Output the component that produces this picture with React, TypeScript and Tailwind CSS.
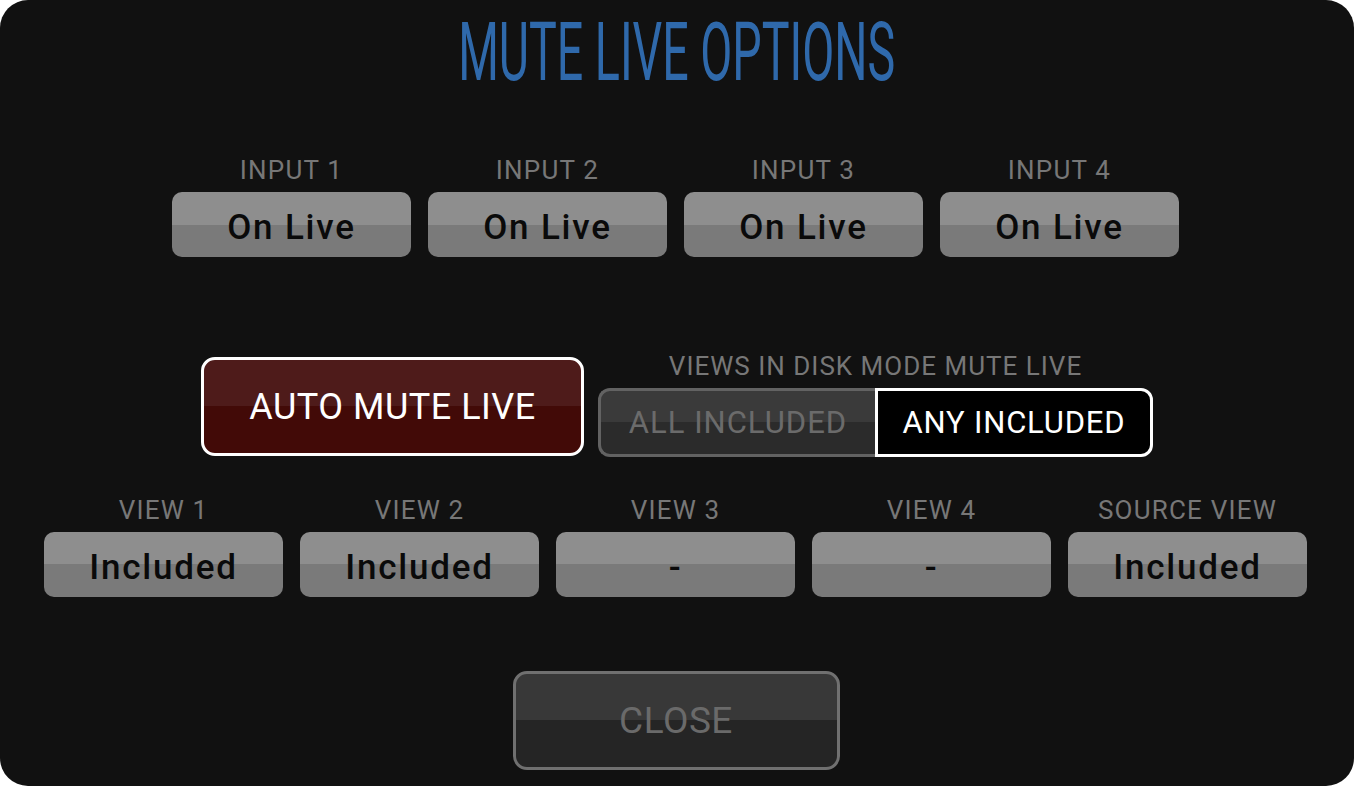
import React from "react";

const font = { fontFamily: "Roboto, 'Liberation Sans', sans-serif" };

function GrayButton({ label, value }: { label: string; value: string }) {
  return (
    <div className="flex flex-col items-center w-[239px]">
      <div className="h-[26px] text-[26px] leading-[26px] text-[#777777] tracking-[1.2px] whitespace-nowrap">
        {label}
      </div>
      <div className="mt-[9px] w-[239px] h-[65px] rounded-[10px] bg-[linear-gradient(to_bottom,#8e8e8e_0%,#8e8e8e_50%,#7a7a7a_50%,#7a7a7a_100%)] flex items-center justify-center pt-[5px]">
        <span className="text-[35px] leading-[35px] font-medium text-[#0a0a0a] tracking-[1.8px]">{value}</span>
      </div>
    </div>
  );
}

export default function App() {
  const inputs = ["INPUT 1", "INPUT 2", "INPUT 3", "INPUT 4"];
  const views: [string, string][] = [
    ["VIEW 1", "Included"],
    ["VIEW 2", "Included"],
    ["VIEW 3", "-"],
    ["VIEW 4", "-"],
    ["SOURCE VIEW", "Included"],
  ];
  return (
    <div className="w-[1354px] h-[786px] bg-white" style={font}>
      <div className="w-full h-full bg-[#111111] rounded-[28px] flex flex-col items-center overflow-hidden">
        <div className="pt-[11px] h-[93px] flex justify-center">
          <h1 className="inline-block text-[82px] leading-[82px] font-normal text-[#2f69ab] scale-x-[0.568] whitespace-nowrap">
            MUTE LIVE OPTIONS
          </h1>
        </div>

        <div className="mt-[64px] mr-[3px] flex gap-[17px]">
          {inputs.map((l) => (
            <GrayButton key={l} label={l} value="On Live" />
          ))}
        </div>

        <div className="mt-[96px] flex items-start gap-[14px]">
          <div className="mt-[4px] w-[383px] h-[99px] rounded-[14px] border-[3px] border-white bg-[linear-gradient(to_bottom,#4e1b1a_0%,#4e1b1a_50%,#420a07_50%,#420a07_100%)] flex items-center justify-center">
            <span className="text-[36px] leading-[36px] text-white tracking-[0.5px]">AUTO MUTE LIVE</span>
          </div>
          <div className="flex flex-col items-center">
            <div className="h-[27px] text-[26px] leading-[27px] text-[#777777] tracking-[1px] whitespace-nowrap">
              VIEWS IN DISK MODE MUTE LIVE
            </div>
            <div className="mt-[8px] flex h-[69px]">
              <div className="w-[277px] h-full rounded-l-[12px] border-[3px] border-r-0 border-[#626262] bg-[linear-gradient(to_bottom,#3a3a3a_0%,#3a3a3a_50%,#2b2b2b_50%,#2b2b2b_100%)] flex items-center justify-center">
                <span className="text-[31px] leading-[31px] text-[#6b6b6b] tracking-[1px]">ALL INCLUDED</span>
              </div>
              <div className="w-[278px] h-full rounded-r-[12px] border-[3px] border-white bg-black flex items-center justify-center">
                <span className="text-[31px] leading-[31px] text-white tracking-[0.8px]">ANY INCLUDED</span>
              </div>
            </div>
          </div>
        </div>

        <div className="mt-[40px] mr-[3px] flex gap-[17px]">
          {views.map(([l, v]) => (
            <GrayButton key={l} label={l} value={v} />
          ))}
        </div>

        <div className="mt-[74px] mr-[2px] w-[327px] h-[99px] rounded-[14px] border-[3px] border-[#707070] bg-[linear-gradient(to_bottom,#383838_0%,#383838_50%,#252525_50%,#252525_100%)] flex items-center justify-center">
          <span className="text-[37px] leading-[37px] text-[#6a6a6a] tracking-[0.5px]">CLOSE</span>
        </div>
      </div>
    </div>
  );
}
